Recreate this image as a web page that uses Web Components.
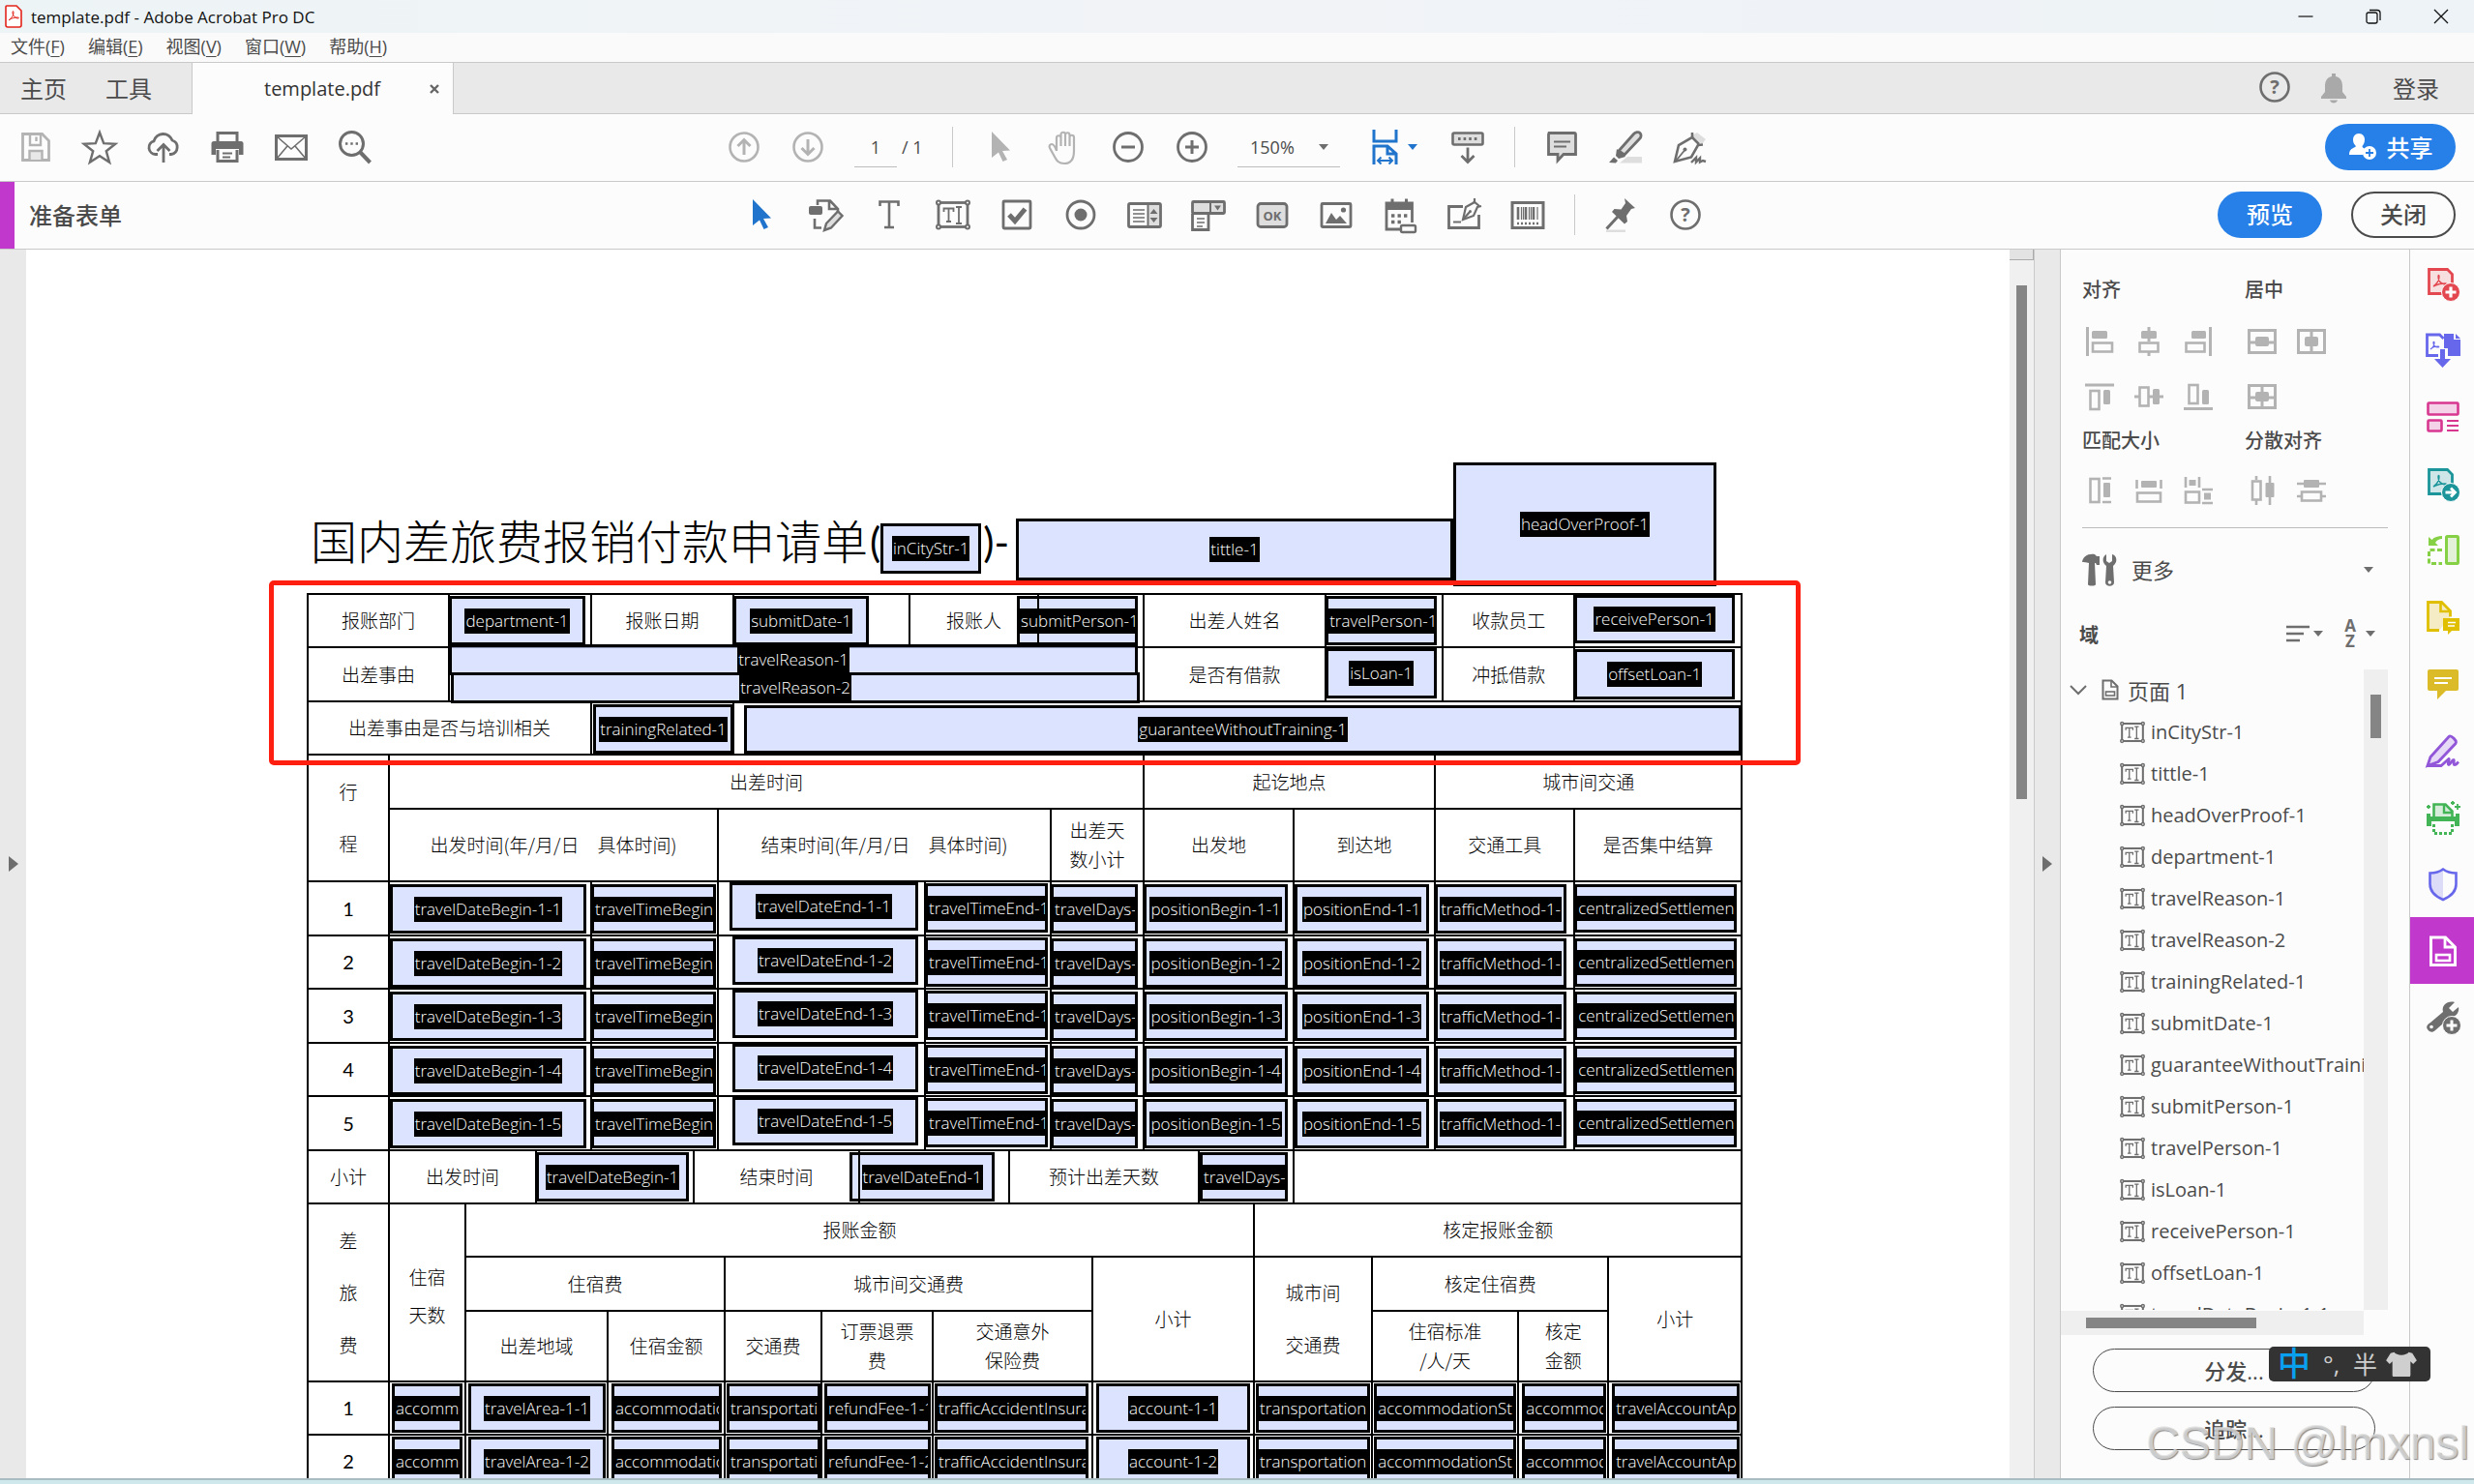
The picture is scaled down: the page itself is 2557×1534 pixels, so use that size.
<!DOCTYPE html>
<html lang="zh-CN">
<head>
<meta charset="utf-8">
<title>template.pdf - Adobe Acrobat Pro DC</title>
<style>
  html, body { margin: 0; height: 100%; }
  body {
    font-family: "Open Sans", "Noto Sans CJK SC", sans-serif;
    color: #4b4b4b;
    background: #fcfcfc;
    overflow: hidden;
    --line: #c9c9c9;
    --bar: #fcfcfc;
    --grey: #e9e9e9;
    --ink: #6e6e6e;
    --blue: #2680e8;
    --magenta: #c038cc;
  }
</style>
</head>
<body>
<acro-app></acro-app>
<script>
const RESET = `*, *::before, *::after { box-sizing: border-box; }
  button { font: inherit; color: inherit; background: none; border: 0; padding: 0; margin: 0; cursor: pointer; }`;

class Base extends HTMLElement {
  connectedCallback() {
    if (this.shadowRoot) return;
    this.attachShadow({ mode: 'open' });
    this.shadowRoot.innerHTML = `<style>${RESET}${this.css()}</style>${this.html()}`;
  }
  css() { return ''; }
  html() { return ''; }
}

/* ---------- icons ---------- */
const ICONS = {
  app: ['0 0 18 24', `<path d="M2 1h10l5 5v15a2 2 0 0 1-2 2H3a2 2 0 0 1-2-2V2a1 1 0 0 1 1-1z" fill="#fff" stroke="#e2231a" stroke-width="1.6"/><path d="M4 16c3-2 5-5 5-8 0-2-1-2-1 0 0 3 2 5 5 6 2 0 2-1 0-1-3 0-6 1-8 2-1 1-1 1-1 1z" fill="none" stroke="#e2231a"/>`],
  save: ['0 0 36 36', `<path d="M4.500 4.500h20l7 7v20h-27z" stroke-width="2.800"/><path d="M12 5v11h11V5" stroke-width="2.400"/><path d="M18.500 7.500v4.500" stroke-width="2.400"/><path d="M11.500 31V22h13v9" fill="#e8e8e8" stroke-width="2.400"/>`],
  star: ['0 0 36 36', `<path d="M18 3l4.200 11.200 12 .5-9.400 7.500 3.300 11.600L18 27.200 7.900 33.800l3.300-11.600L1.800 14.700l12-.5z" stroke-width="2.400"/>`],
  cloud: ['0 0 36 36', `<path d="M12 25.500H9.500a7 7 0 0 1-1.500-13.700A10 10 0 0 1 27 11a7.500 7.500 0 0 1-1 14.500h-2" stroke-width="2.800"/><path d="M18 34V16M11.500 22l6.500-6.500 6.500 6.500" stroke-width="2.800"/>`],
  print: ['0 0 36 36', `<path d="M8 12V3.500h20V12" stroke-width="3"/><path d="M4 12h28a2.500 2.500 0 0 1 2.500 2.500V26H30V20H6v6H1.500V14.500A2.500 2.500 0 0 1 4 12z" fill="currentColor" stroke="none"/><path d="M8 21v11.500h20V21" fill="#fcfcfc" stroke-width="3"/><path d="M13 24.500h10M13 28.500h8" stroke-width="2"/>`],
  mail: ['0 0 36 36', `<path d="M2.500 6.500h31v24h-31z" stroke-width="3"/><path d="M3 7l15 13L33 7M3 30l11-13M33 30L22 17" stroke-width="1.600"/>`],
  search: ['0 0 36 36', `<circle cx="14.500" cy="14.500" r="12" stroke-width="3"/><path d="M23 23l10.500 11" stroke-width="4"/><path d="M8 14.500h2.400M13.300 14.500h2.400M18.600 14.500H21" stroke-width="2.400"/>`],
  up: ['0 0 36 36', `<circle cx="18" cy="18" r="14.500" stroke-width="2.600"/><path d="M18 26V11M11.500 17L18 10.500l6.500 6.500" stroke-width="3"/>`],
  down: ['0 0 36 36', `<circle cx="18" cy="18" r="14.500" stroke-width="2.600"/><path d="M18 10v15M11.500 19l6.500 6.500 6.500-6.500" stroke-width="3"/>`],
  cursor: ['0 0 36 36', `<path d="M9 2l19 19.500-8 .5 5 9-4.500 2-4.500-9.500-7 5.500z" fill="currentColor" stroke="none"/>`],
  hand: ['0 0 36 36', `<path d="M10 22V8.500a2.200 2.200 0 0 1 4.500 0V17M14.500 17V5a2.200 2.200 0 0 1 4.500 0v12M19 17V5.500a2.200 2.200 0 0 1 4.500 0V17M23.500 17V8a2.200 2.200 0 0 1 4.500 0v14c0 8-3 13-10 13-6 0-8-3-10-7l-5-9c-1-2 0-4 2-4s4 4 5 7" stroke-width="2.200"/>`],
  minus: ['0 0 36 36', `<circle cx="18" cy="18" r="14.500" stroke-width="2.800"/><path d="M11 18h14" stroke-width="3"/>`],
  plus: ['0 0 36 36', `<circle cx="18" cy="18" r="14.500" stroke-width="2.800"/><path d="M11 18h14M18 11v14" stroke-width="3"/>`],
  fit: ['0 0 36 36', `<path d="M6 0v12h23V0M6 36V17h14l9 8v11M20 17v8h9" stroke-width="3"/><path d="M10 32h15M13.500 28.500L10 32l3.500 3.500M21.500 28.500L25 32l-3.500 3.500" stroke-width="2"/>`],
  keys: ['0 0 36 36', `<rect x="2.500" y="3.500" width="31" height="12" rx="1.500" fill="#dedede" stroke-width="2.600"/><path d="M8 9.500h2.600M13.600 9.500h2.600M19.200 9.500h2.600M24.800 9.500h2.600" stroke-width="3"/><path d="M18 18.500V33M11.500 27l6.500 6.500 6.500-6.500" stroke-width="2.800"/>`],
  comment: ['0 0 36 36', `<path d="M5 3.500h26a1.500 1.500 0 0 1 1.500 1.500v20.500H20L14 32v-6.500H4.500V5z" fill="#dedede" stroke-width="2.800"/><path d="M10 12.500h17M10 17.500h13" stroke-width="2"/>`],
  marker: ['0 0 36 36', `<path d="M12 34.500L20 28h15v6.500z" fill="#dedede" stroke="none"/><path d="M11 22L26.500 4.500c2-2.200 5-2.500 6.500-1s1.500 4-.5 6L17 26z" fill="#dedede" stroke-width="2.800"/><path d="M9 20l9 8-7 2-3-3z" fill="currentColor" stroke="none"/><path d="M1 34l5-5.500 4 3.500-2 2.500z" fill="currentColor" stroke="none"/>`],
  pen: ['0 0 36 36', `<path d="M21 6l10 9 4-5-9-7z" fill="#dedede" stroke="none"/><path d="M21 3v5L7 16 3 33l17-4.500L27 16l5-.5" stroke-width="2.600"/><path d="M20.500 7.500L28 15" stroke-width="2.600"/><path d="M3.500 33L13 21.500" stroke-width="1.800"/><circle cx="13.500" cy="20.500" r="2" fill="currentColor" stroke="none"/><path d="M20 34l5-5v4.500l4-4v4l3-1.500 3 1" stroke-width="2.400"/>`],
  editForm: ['0 0 36 36', `<path d="M10 8V3.500h13L31 12v4M22 4v8h8" stroke-width="2.600"/><rect x="1" y="9" width="14" height="9" rx="2" fill="currentColor" stroke="none"/><path d="M7 22v9.500h7" stroke-width="2.600"/><path d="M17 34l2-7 12-12.500 4.500 4.500L24 31.500z" fill="#dedede" stroke-width="2.400"/>`],
  text: ['0 0 36 36', `<path d="M8.500 9V4.500h19V9M18 5v25.500M13 31h10" stroke-width="2.600"/>`],
  textField: ['0 0 36 36', `<rect x="3" y="5.500" width="30" height="25" stroke-width="2.800"/><path d="M8.500 15v-3.500h10V15M13.500 12v13M11 25h5M21 10h6M21 27h6M24 10v17" stroke-width="1.800"/><g fill="#fcfcfc" stroke-width="2"><circle cx="3" cy="5.500" r="2"/><circle cx="33" cy="5.500" r="2"/><circle cx="3" cy="30.500" r="2"/><circle cx="33" cy="30.500" r="2"/></g>`],
  check: ['0 0 36 36', `<rect x="4" y="4" width="28" height="28" rx="1" stroke-width="2.800"/><path d="M10 18l6 6.500L26.500 12" stroke-width="5"/>`],
  radio: ['0 0 36 36', `<circle cx="18" cy="18" r="14" stroke-width="2.800"/><circle cx="18" cy="18" r="6.500" fill="currentColor" stroke="none"/>`],
  list: ['0 0 36 36', `<rect x="1.500" y="6.500" width="33" height="24" rx="1.500" stroke-width="2.800"/><path d="M22 8h11v21H22z" fill="#dedede" stroke="none"/><path d="M21.500 7v23" stroke-width="2"/><path d="M6 13h12M6 17h12M6 21h12M6 25h12" stroke-width="1.600"/><path d="M27.500 12l4 5h-8zM27.500 26l4-5h-8z" fill="currentColor" stroke="none"/>`],
  dropdown: ['0 0 36 36', `<rect x="1.500" y="4.500" width="33" height="12" rx="1" fill="#dedede" stroke-width="2.800"/><path d="M20 5v12" stroke-width="2"/><path d="M24 8.500h7l-3.500 5z" fill="currentColor" stroke="none"/><path d="M1.500 17v16.500H18V17" stroke-width="2.800"/><path d="M6 22h8M6 26h8M6 30h6" stroke-width="1.600"/>`],
  ok: ['0 0 36 36', `<rect x="3" y="6.500" width="30" height="24" rx="3" fill="#dedede" stroke-width="2.800"/><text x="18" y="23.500" text-anchor="middle" font-size="13" font-weight="700" font-family="Open Sans, sans-serif" fill="currentColor" stroke="none">OK</text>`],
  image: ['0 0 36 36', `<rect x="3" y="6.500" width="30" height="24" rx="1" stroke-width="2.800"/><path d="M7 27l6-11 5 7 4-4 7 8z" fill="currentColor" stroke="none"/><circle cx="25.500" cy="13" r="2.600" fill="currentColor" stroke="none"/>`],
  calendar: ['0 0 36 36', `<path d="M4 5h27v8H4z" fill="currentColor" stroke="none"/><path d="M18 33H4V6h26.500v20" stroke-width="2.800"/><path d="M10 1.500v5M24.500 1.500v5" stroke-width="3"/><path d="M9 19h3.400M15.500 19h3.400M22 19h3.400M9 25.500h3.400M15.500 25.500h3.400" stroke-width="3.600"/><rect x="19" y="29" width="15" height="7" rx="1.500" fill="#fcfcfc" stroke-width="2.400"/>`],
  sign: ['0 0 36 36', `<path d="M17 9.500H2.500v22h31V18" stroke-width="2.800"/><path d="M7 25.500h8" stroke-width="2"/><path d="M29 1v4l-9 5-3 13 11-4 4-9 4-1" fill="#fcfcfc" stroke-width="2.200"/><path d="M28 4l6 5M17.500 22.500l7-8" stroke-width="2.200"/><circle cx="24.500" cy="14.500" r="1.500" fill="currentColor" stroke="none"/>`],
  barcode: ['0 0 36 36', `<rect x="2" y="5.500" width="32" height="26" stroke-width="3"/><path d="M8 10v13M16 10v13M24 10v13" stroke-width="2.600"/><path d="M11.500 10v13M13.500 10v13M19.500 10v13M21.500 10v13M28 10v13" stroke-width="1.200"/><path d="M7 27h22" stroke-width="2.400" stroke-dasharray="2 2"/>`],
  pin: ['0 0 36 36', `<path d="M2 33.500h20v2.500H2z" fill="#dedede" stroke="none"/><path d="M21 1l11 10-4 1-5 7 1 6-3 2.500L8 15l2.500-3 7 .5L22 6z" fill="currentColor" stroke="none"/><path d="M14 20L2.500 32.500" stroke-width="3"/>`],
  help: ['0 0 36 36', `<circle cx="18" cy="18" r="14.500" stroke-width="2.600"/><text x="18" y="25" text-anchor="middle" font-size="20" font-weight="700" font-family="Open Sans, sans-serif" fill="currentColor" stroke="none">?</text>`],
  bell: ['0 0 36 36', `<path d="M16 4h4v3c5 1 7 5 7 10v6l4 5v2H5v-2l4-5v-6c0-5 2-9 7-10zM14 31.500h8c-1 4-7 4-8 0z" fill="currentColor" stroke="none"/>`],
  user: ['0 0 30 30', `<path d="M11 2c4 0 6 3 6 6.500 0 3-1.500 5.500-2.500 6.500 0 1.500 1 2 4 3.500-2 1.500-3 3.500-3 5.500H1c0-5 2-6 6-8 1-.5 1-1 .5-1.500C6 13 5 11 5 8.500 5 5 7 2 11 2z" fill="#fff" stroke="none"/><circle cx="22" cy="22" r="7" fill="#fff" stroke="none"/><path d="M22 18v8M18 22h8" stroke="#2680e8" stroke-width="1.800"/>`],
  min: ['0 0 16 16', `<path d="M0.500 8h15" stroke-width="1.200"/>`],
  restore: ['0 0 16 16', `<rect x="1" y="4" width="11" height="11" rx="2" stroke-width="1.300"/><path d="M4 1.500h8a3 3 0 0 1 3 3V12" stroke-width="1.300"/>`],
  close: ['0 0 16 16', `<path d="M1 1l14 14M15 1L1 15" stroke-width="1.300"/>`],
  x: ['0 0 12 12', `<path d="M2 2l8 8M10 2l-8 8" stroke-width="2.400"/>`],
  caret: ['0 0 10 6', `<path d="M0 0h10L5 6z" fill="currentColor" stroke="none"/>`],
  right: ['0 0 10 16', `<path d="M0 0l10 8-10 8z" fill="currentColor" stroke="none"/>`],
  chevron: ['0 0 18 12', `<path d="M1 2l8 8 8-8" stroke-width="2"/>`],
  /* alignment tools */
  alLeft: ['0 0 32 32', `<path d="M3.500 1v30" stroke-width="3"/><rect x="8" y="5" width="16" height="8" rx="1.500" fill="currentColor" stroke="none"/><rect x="9" y="17.500" width="20" height="9" stroke-width="2.600"/>`],
  alCenter: ['0 0 32 32', `<path d="M16 1v15M16 27v4" stroke-width="3"/><rect x="8" y="5" width="16" height="8" rx="1.500" fill="currentColor" stroke="none"/><rect x="6.500" y="17.500" width="19" height="9" stroke-width="2.600"/>`],
  alRight: ['0 0 32 32', `<path d="M28.500 1v30" stroke-width="3"/><rect x="9" y="5" width="15" height="8" rx="1.500" fill="currentColor" stroke="none"/><rect x="3.500" y="17.500" width="19" height="9" stroke-width="2.600"/>`],
  alTop: ['0 0 32 32', `<path d="M1 4h30" stroke-width="3"/><rect x="6.500" y="10" width="9" height="19" stroke-width="2.600"/><rect x="20" y="9" width="7" height="15" rx="1.500" fill="currentColor" stroke="none"/>`],
  alMiddle: ['0 0 32 32', `<path d="M1 16h5M15 16h16" stroke-width="3"/><rect x="6.500" y="6.500" width="9" height="19" stroke-width="2.600"/><rect x="20" y="8" width="7" height="16" rx="1.500" fill="currentColor" stroke="none"/>`],
  alBottom: ['0 0 32 32', `<path d="M1 28.500h30" stroke-width="3"/><rect x="6.500" y="4" width="9" height="19" stroke-width="2.600"/><rect x="20" y="9" width="7" height="15" rx="1.500" fill="currentColor" stroke="none"/>`],
  cH: ['0 0 32 32', `<rect x="2.500" y="4.500" width="27" height="23" stroke-width="3"/><path d="M3 17h26" stroke-width="3"/><rect x="9" y="11" width="14" height="10" rx="2" fill="currentColor" stroke="none"/>`],
  cV: ['0 0 32 32', `<rect x="2.500" y="4.500" width="27" height="23" stroke-width="3"/><path d="M16 5v22" stroke-width="3"/><rect x="9" y="11" width="14" height="10" rx="2" fill="currentColor" stroke="none"/>`],
  cB: ['0 0 32 32', `<rect x="2.500" y="4.500" width="27" height="23" stroke-width="3"/><path d="M3 17h26M16 5v22" stroke-width="3"/><rect x="9" y="11" width="14" height="10" rx="2" fill="currentColor" stroke="none"/>`],
  mH: ['0 0 32 32', `<rect x="6.500" y="4" width="9" height="24" stroke-width="2.600"/><rect x="20" y="8" width="7" height="15" rx="1" fill="currentColor" stroke="none"/><path d="M19 3.500h9M19 28h9" stroke-width="2.600"/>`],
  mW: ['0 0 32 32', `<rect x="4" y="18.500" width="24" height="9" stroke-width="2.600"/><rect x="8" y="6" width="16" height="7" rx="1" fill="currentColor" stroke="none"/><path d="M3.500 5v9M28.500 5v9" stroke-width="2.600"/>`],
  mB: ['0 0 32 32', `<path d="M3 2v11M17 2v11M20 15h11M20 29h11" stroke-width="2.600"/><rect x="6.500" y="5" width="7" height="6" fill="currentColor" stroke="none"/><rect x="3" y="17.500" width="14" height="11" stroke-width="2.600"/><rect x="22" y="18.500" width="7" height="7" fill="currentColor" stroke="none"/>`],
  dH: ['0 0 32 32', `<path d="M10 1v4M10 26v5M24 1v30" stroke-width="2.600"/><rect x="6" y="6.500" width="8.500" height="19" stroke-width="2.600"/><rect x="19.500" y="8" width="9" height="15" rx="1" fill="currentColor" stroke="none"/>`],
  dV: ['0 0 32 32', `<path d="M1 9h30M1 22h4M27 22h4" stroke-width="2.600"/><rect x="8" y="5" width="16" height="8" rx="1" fill="currentColor" stroke="none"/><rect x="6" y="17.500" width="20" height="9" stroke-width="2.600"/>`],
  tools: ['0 0 36 36', `<path d="M0 10C1 4 6 1 13 2l2 2h3v9h-3l-1-2h-1l1 22c0 2-8 2-8 0l1-22c-3-1-5-1-7-1z" fill="currentColor" stroke="none"/><path d="M25 2v7l3 2 3-2V2c4 1 5 5 4 8-1 2-2 3-3 4l1 17c0 5-9 5-9 0l1-17c-4-3-5-9 0-12z" fill="currentColor" stroke="none"/><circle cx="28.500" cy="31" r="1.800" fill="#fff" stroke="none"/>`],
  sort: ['0 0 26 20', `<path d="M1 3h24M1 10h18M1 17h14" stroke-width="2.600"/>`],
  az: ['0 0 16 30', `<text x="8" y="13" text-anchor="middle" font-size="17" font-weight="700" font-family="Open Sans, sans-serif" fill="currentColor" stroke="none">A</text><text x="8" y="29" text-anchor="middle" font-size="17" font-weight="700" font-family="Open Sans, sans-serif" fill="currentColor" stroke="none">Z</text>`],
  pageForm: ['0 0 18 22', `<path d="M1.500 1.500h9l6 6v13h-15z" stroke-width="2"/><path d="M10 2v6h6" stroke-width="1.600"/><rect x="4.500" y="13" width="9" height="4" stroke-width="1.600"/>`],
  /* tool rail */
  rCreate: ['0 0 36 36', `<path d="M3.500 3.500h19l5 5v20h-24z" fill="#f8dfdf" stroke-width="2.800"/><path d="M8 21c4-3 6-6 6-10 0-2-1-2-1 0 0 4 3 7 7 8 2 0 2-1 0-1-4 0-8 1-10 2z" stroke-width="1.400"/><circle cx="26" cy="27" r="9.500" fill="currentColor" stroke="#fcfcfc"/><path d="M20.500 27h11M26 21.500v11" stroke="#fff" stroke-width="3.200"/>`],
  rCombine: ['0 0 36 36', `<path d="M13 23.500H1.500V2h13l4 4" stroke-width="2.800"/><path d="M19 1h10v6h7v17H23v-8h-4z" fill="currentColor" stroke="none"/><path d="M31 1l5 5h-5z" fill="currentColor" stroke="none"/><path d="M5 17c3-2 4-4 4-7 0-1-1-1-1 0 0 3 2 5 5 5 1 0 1-1 0-1-3 0-6 1-8 3z" stroke-width="1.200"/><path d="M15 17h5v10h6l-8.500 9L9 27h6z" fill="currentColor" stroke="none"/>`],
  rOrganize: ['0 0 36 36', `<rect x="2.500" y="3.500" width="31" height="12" rx="1" fill="#f4d2e8" stroke-width="2.600"/><rect x="2.500" y="21.500" width="14" height="11" rx="1" fill="#f4d2e8" stroke-width="2.600"/><path d="M22 22h12M22 27h12M22 32h12" stroke-width="1.800"/>`],
  rExport: ['0 0 36 36', `<path d="M3.500 3.500h19l5 5v20h-24z" fill="#cfe6e8" stroke-width="2.800"/><path d="M8 21c4-3 6-6 6-10 0-2-1-2-1 0 0 4 3 7 7 8 2 0 2-1 0-1-4 0-8 1-10 2z" stroke-width="1.400"/><circle cx="26" cy="27" r="9.500" fill="currentColor" stroke="#fcfcfc"/><path d="M20.500 27h9M26 22.500l4.500 4.500-4.500 4.500" stroke="#fff" stroke-width="2.800"/>`],
  rCompress: ['0 0 36 36', `<rect x="21.500" y="3.500" width="12" height="28" rx="1" fill="#e3f1d8" stroke-width="3"/><path d="M17 17.500H3.500v14H17" stroke-width="3" stroke-dasharray="5 2.500"/><path d="M3 4l3.500 3C9 4 13 3 17 3v3c-3 0-5 1-7 4l3 3H3z" fill="currentColor" stroke="none"/>`],
  rPageNote: ['0 0 36 36', `<path d="M14 31.500H2.500v-29h14l9 9v6" fill="#f5ecc6" stroke-width="2.800"/><path d="M15.500 3v9h9" stroke-width="2.600"/><path d="M18 19h17v13h-8l-4 4v-4h-5z" fill="currentColor" stroke="none"/><path d="M23 23.500h8M23 27h7" stroke="#fff" stroke-width="1.400"/>`],
  rComment: ['0 0 36 36', `<path d="M4 3h28a2 2 0 0 1 2 2v18a2 2 0 0 1-2 2H21l-9 9v-9H4a2 2 0 0 1-2-2V5a2 2 0 0 1 2-2z" fill="currentColor" stroke="none"/><path d="M9 12h18M9 17h14" stroke="#fff" stroke-width="2"/>`],
  rSign: ['0 0 36 36', `<path d="M2 33.500l3-9L24 3.500c2-2 9 4 7 7L13 29.500z" fill="#e6daf6" stroke-width="2.800"/><path d="M2 33.500h14l8-7c1 0-2 6 0 6 1.500 0 3-5 5-5 1 0-1 5 1 5s2-1 4-3" stroke-width="2.800"/>`],
  rScan: ['0 0 36 36', `<path d="M8.500 17V4.500h12l7 7V17" fill="#d8ecdc" stroke-width="2.600"/><path d="M19 5v8h8" stroke-width="2.400"/><path d="M1 14h4v3h26v-3h4v13h-5v-5H6v5H1z" fill="currentColor" stroke="none"/><path d="M8.500 25v9.500h19V25" stroke-width="3" stroke-dasharray="3 2"/><path d="M3 5v4M1 7h4M28 1v4M26 3h4M33 4v6M30 7h6" stroke-width="1.800"/>`],
  rShield: ['0 0 36 36', `<path d="M18 3v30C9 29 5 24 5 18V7c5 0 9-1 13-4z" fill="#dcdcf9" stroke="none"/><path d="M18 2.500c4 3 8 4 13.500 4V18c0 7-4 12-13.500 16C8.500 30 4.500 25 4.500 18V6.500c5.500 0 9.500-1 13.500-4z" stroke-width="2.600"/>`],
  rForm: ['0 0 36 36', `<path d="M5.500 4h15l10 10v18.500h-25z" stroke-width="3"/><path d="M20 4.500V14h10" stroke-width="2.800"/><rect x="11" y="22" width="14" height="6" stroke-width="2.600"/>`],
  rTools: ['0 0 36 36', `<path d="M30 2l-6 6 4 4 6-5c1 5-2 10-8 10L10 31c-3 3-6 2-8-1s0-5 3-7L18 12c-2-7 5-12 12-10z" fill="currentColor" stroke="none"/><circle cx="6" cy="27.500" r="1.800" fill="#fff" stroke="none"/><circle cx="27" cy="26" r="9.500" fill="currentColor" stroke="#fcfcfc"/><path d="M21.500 26h11M27 20.500v11" stroke="#fff" stroke-width="3"/>`],
  shirt: ['0 0 34 30', `<path d="M9 2c2 4 14 4 16 0l4 1 5 8-4 4-3-3v15c0 2-1 2-2 2H9c-2 0-2-1-2-2V12l-3 3-4-4 5-8z" fill="#cfcfcf" stroke="none"/>`]
};
class PdfIcon extends Base {
  css() { return `:host { display: block; flex: none; width: 36px; height: 36px; }
    svg { display: block; width: 100%; height: 100%; overflow: visible; fill: none; stroke: currentColor; }`; }
  html() {
    const [box, body] = ICONS[this.getAttribute('name')];
    return `<svg viewBox="${box}" aria-hidden="true">${body}</svg>`;
  }
}
customElements.define('pdf-icon', PdfIcon);

/* ---------- window chrome ---------- */
customElements.define('title-bar', class extends Base {
  css() { return `:host { display: flex; align-items: center; height: 34px; padding: 0 26px 0 5px; gap: 9px; color: #111;
      font-size: 17px; background: linear-gradient(90deg, #edf4f6, #f1f3f7 50%, #edf3f6); }
    .app { width: 18px; height: 24px; }
    .grow { flex: 1; }
    .ctl { display: flex; gap: 54px; }
    .ctl pdf-icon { width: 16px; height: 16px; }`; }
  html() { return `<pdf-icon class="app" name="app"></pdf-icon><span>template.pdf - Adobe Acrobat Pro DC</span><span class="grow"></span>
    <div class="ctl"><button aria-label="最小化"><pdf-icon name="min"></pdf-icon></button><button aria-label="还原"><pdf-icon name="restore"></pdf-icon></button><button aria-label="关闭窗口"><pdf-icon name="close"></pdf-icon></button></div>`; }
});
customElements.define('menu-bar', class extends Base {
  css() { return `:host { display: flex; align-items: center; box-sizing: border-box; height: 31px; padding: 0 11px 3px; gap: 24px; font-size: 18px; background: #fafafa; border-bottom: 1px solid var(--line); }
    button { font-size: 18px; line-height: 26px; white-space: nowrap; } u { text-underline-offset: 3px; text-decoration-thickness: 1px; }`; }
  html() { return [['文件','F'],['编辑','E'],['视图','V'],['窗口','W'],['帮助','H']].map(([a,b]) => `<button>${a}(<u>${b}</u>)</button>`).join(''); }
});
customElements.define('tab-strip', class extends Base {
  css() { return `:host { display: flex; height: 53px; background: var(--grey); font-size: 24px; }
    .side { display: flex; align-items: center; padding-bottom: 2px; border-bottom: 1px solid var(--line); }
    .home { gap: 40px; width: 199px; padding-left: 21px; border-right: 1px solid var(--line); }
    .tab { display: flex; align-items: center; width: 270px; padding: 0 13px 0 74px; background: var(--bar); font-size: 20px; color: #333; border-right: 1px solid var(--line); }
    .tab span { flex: 1; }
    .tab pdf-icon { width: 12px; height: 12px; color: #666; }
    .end { flex: 1; justify-content: flex-end; padding-right: 36px; color: #6e6e6e; }
    .end button:nth-child(2) { margin: 0 43px 0 25px; color: #a9a9a9; }
    .end button:last-child { color: #4b4b4b; }`; }
  html() { return `<div class="side home"><button>主页</button><button>工具</button></div>
    <div class="tab"><span>template.pdf</span><button aria-label="关闭标签"><pdf-icon name="x"></pdf-icon></button></div>
    <div class="side end"><button aria-label="帮助"><pdf-icon name="help"></pdf-icon></button><button aria-label="通知"><pdf-icon name="bell"></pdf-icon></button><button>登录</button></div>`; }
});

const BAR = `:host { display: grid; align-items: center; box-sizing: border-box; height: 70px; padding-bottom: 1px; background: var(--bar); border-bottom: 1px solid var(--line); color: var(--ink); }
  .g { display: flex; align-items: center; }
  .i { display: flex; justify-content: center; width: 66px; }
  .dim { color: #b3b3b3; } .blue { color: #2174cc; }
  .rule { width: 1px; height: 42px; background: var(--line); }
  .end { justify-content: flex-end; padding-right: 19px; gap: 30px; }
  .pill { display: flex; align-items: center; justify-content: center; height: 48px; padding-bottom: 2px; border-radius: 24px; font-size: 24px; font-weight: 500; }
  .fill { background: var(--blue); color: #fff; }
  .out { border: 2px solid #4b4b4b; color: #4b4b4b; }`;
const btn = (n, label, cls = '') => `<button class="i ${cls}" aria-label="${label}"><pdf-icon name="${n}"></pdf-icon></button>`;

customElements.define('main-toolbar', class extends Base {
  css() { return BAR + `:host { grid-template-columns: minmax(auto, 736fr) auto minmax(auto, 778fr); }
    .start { padding-left: 4px; }
    input, select { font: 18px "Open Sans", sans-serif; color: #4b4b4b; background: none; border: 0; border-bottom: 1px solid #bdbdbd; border-radius: 0; height: 42px; outline: 0; appearance: none; }
    input { width: 44px; margin-left: 15px; padding: 0; text-align: center; }
    .of { width: 26px; margin: 0 26px 0 5px; font-size: 18px; color: #4b4b4b; white-space: nowrap; }
    .r1 { margin-right: 16px; }
    .zoom { display: grid; align-items: center; width: 106px; margin: 0 29px 0 14px; }
    .zoom > * { grid-area: 1 / 1; }
    .zoom select { width: 100%; padding: 0 0 0 13px; }
    .zoom pdf-icon { justify-self: end; margin-right: 12px; }
    .small { width: 10px; height: 6px; }
    .fit { display: flex; align-items: center; gap: 5px; margin-right: 19px; }
    .r2 { margin: 0 15px; }
    .share { width: 135px; gap: 10px; }
    .share pdf-icon { width: 30px; height: 30px; }`; }
  html() { return `<div class="g start">${btn('save','保存','dim')}${btn('star','收藏')}${btn('cloud','上传')}${btn('print','打印')}${btn('mail','邮件')}${btn('search','查找')}</div>
    <div class="g">${btn('up','上一页','dim')}${btn('down','下一页','dim')}<input value="1" aria-label="页码"><span class="of">/ 1</span><span class="rule r1"></span>
    ${btn('cursor','选择','dim')}${btn('hand','手形','dim')}${btn('minus','缩小')}${btn('plus','放大')}
    <label class="zoom"><select aria-label="缩放"><option>150%</option></select><pdf-icon class="small" name="caret"></pdf-icon></label>
    <button class="fit blue" aria-label="适合宽度"><pdf-icon name="fit"></pdf-icon><pdf-icon class="small" name="caret"></pdf-icon></button>
    ${btn('keys','页面显示')}<span class="rule r2"></span>${btn('comment','附注')}${btn('marker','高亮')}${btn('pen','签名')}</div>
    <div class="g end"><button class="pill fill share"><pdf-icon name="user"></pdf-icon>共享</button></div>`; }
});
customElements.define('prepare-toolbar', class extends Base {
  css() { return BAR + `:host { grid-template-columns: minmax(auto, 755fr) auto minmax(auto, 783fr); padding-bottom: 0; }
    .g { padding-bottom: 2px; }
    .start { align-self: stretch; border-left: 15px solid var(--magenta); padding-left: 15px; font-size: 24px; color: #4b4b4b; font-weight: 500; }
    .rule { margin: 0 15px; }
    .end .pill { width: 108px; }`; }
  html() { return `<div class="g start">准备表单</div>
    <div class="g">${btn('cursor','选择对象','blue')}${btn('editForm','编辑')}${btn('text','添加文本')}${btn('textField','文本域')}${btn('check','复选框')}${btn('radio','单选按钮')}${btn('list','列表框')}${btn('dropdown','下拉列表')}${btn('ok','按钮')}${btn('image','图像域')}${btn('calendar','日期域')}${btn('sign','签名域')}${btn('barcode','条形码')}<span class="rule"></span>${btn('pin','固定')}${btn('help','帮助')}</div>
    <div class="g end"><button class="pill fill">预览</button><button class="pill out">关闭</button></div>`; }
});

/* ---------- document ---------- */
customElements.define('form-field', class extends Base {
  css() { return `:host { display: flex; align-items: center; justify-content: center; box-sizing: border-box; border: 3px solid #000; background: rgba(205, 215, 255, .7); min-width: 0; }
    span { max-width: 100%; overflow: hidden; white-space: nowrap; background: #000; color: #fff; font: 300 17px/26px "Open Sans", sans-serif; padding: 0 1px; }`; }
  html() { return `<span><slot></slot></span>`; }
});

/* cell: [start, end, content, options]; a field is {f: name, l, r, t, h} with its margins inside the ruled cell */
const F = (f, l, r, t = 2, h = 51) => ({ f, l, r, t, h });
const fieldTag = o => `<form-field style="margin:${o.t}px ${o.r}px 0 ${o.l}px;height:${o.h}px">${o.f}</form-field>`;
const trip = (n, h) => [h, [
  [0, 84, n, { c: 'n' }],
  [84, 293, F(`travelDateBegin-1-${n}`, 0, 4)], [293, 424, F('travelTimeBegin-', -1, 1)],
  [424, 638, F(`travelDateEnd-1-${n}`, n === 1 ? 11 : 14, 6, 0, 50)], [638, 768, F('travelTimeEnd-1', -1, 2, 1)],
  [768, 864, F('travelDays-1', -1, 5)], [864, 1019, F(`positionBegin-1-${n}`, -1, 5)],
  [1019, 1165, F(`positionEnd-1-${n}`, 0, 5)], [1165, 1309, F('trafficMethod-1-', -1, 7)],
  [1309, 1482, F('centralizedSettlement', -1, 4, 2, 50)]]];
const cost = n => [55, [
  [0, 84, n, { c: 'n' }],
  [84, 163, F('accommo', 2, 2, 1)], [163, 310, F(`travelArea-1-${n}`, 2, 1, 1)],
  [310, 431, F('accommodatio', 3, 2, 1)], [431, 531, F('transportati', 1, 0, 1)],
  [531, 646, F(`refundFee-1-${n}`, 2, 1, 1)], [646, 811, F('trafficAccidentInsura', 1, 3, 1)],
  [811, 978, F(`account-1-${n}`, 3, 3, 1)], [978, 1100, F('transportationF', 1, 1, 1)],
  [1100, 1251, F('accommodationSt', 1, 1, 1)], [1251, 1344, F('accommod', 3, 1, 1)],
  [1344, 1482, F('travelAccountApp', 3, 1, 1)]]];
const ROWS = [
  [55, [[0,146,'报账部门'],[146,293,F('department-1',-1,5,1)],[293,440,'报账日期'],[440,622,F('submitDate-1',-1,41,1)],[622,755,'报账人'],[755,864,F('submitPerson-1',-23,5,1)],[864,1052,'出差人姓名'],[1052,1173,F('travelPerson-1',-1,5,1)],[1173,1309,'收款员工'],[1309,1482,F('receivePerson-1',-1,6,0,50)]]],
  [56, [[0,146,'出差事由'],[146,864,'stack'],[864,1052,'是否有借款'],[1052,1173,F('isLoan-1',-1,5,0,52)],[1173,1309,'冲抵借款'],[1309,1482,F('offsetLoan-1',-1,6,1,52)]]],
  [55, [[0,293,'出差事由是否与培训相关'],[293,440,F('trainingRelated-1',1,-1,2,51)],[440,1482,F('guaranteeWithoutTraining-1',10,-1,3,50)]]],
  [56, [[0,84,'行<br>程',{rs:2,c:'tall'}],[84,864,'出差时间'],[864,1165,'起讫地点'],[1165,1482,'城市间交通']]],
  [75, [[84,424,'出发时间(年/月/日　具体时间)'],[424,768,'结束时间(年/月/日　具体时间)'],[768,864,'出差天<br>数小计'],[864,1019,'出发地'],[1019,1165,'到达地'],[1165,1309,'交通工具'],[1309,1482,'是否集中结算']]],
  trip(1, 56), trip(2, 55), trip(3, 56), trip(4, 55), trip(5, 56),
  [55, [[0,84,'小计'],[84,236,'出发时间'],[236,399,F('travelDateBegin-1',-1,4,1)],[399,570,'结束时间'],[570,725,F('travelDateEnd-1',-11,14,1)],[725,921,'预计出差天数'],[921,1019,F('travelDays-1',0,5,1)],[1019,1482,'']]],
  [55, [[0,84,'差<br>旅<br>费',{rs:3,c:'tall'}],[84,163,'住宿<br>天数',{rs:3,c:'mid'}],[163,978,'报账金额'],[978,1482,'核定报账金额']]],
  [56, [[163,431,'住宿费'],[431,811,'城市间交通费'],[811,978,'小计',{rs:2}],[978,1100,'城市间<br>交通费',{rs:2,c:'tall'}],[1100,1344,'核定住宿费'],[1344,1482,'小计',{rs:2}]]],
  [73, [[163,310,'出差地域'],[310,431,'住宿金额'],[431,531,'交通费'],[531,646,'订票退票<br>费'],[646,811,'交通意外<br>保险费'],[1100,1251,'住宿标准<br>/人/天'],[1251,1344,'核定<br>金额']]],
  cost(1), cost(2)
];

customElements.define('form-sheet', class extends Base {
  css() { return `:host { display: block; width: 1498px; margin: 0 auto; padding: 220px 0 0 14px; color: #000; }
    header { display: flex; align-items: flex-end; margin-bottom: 7px; padding-right: 27px; }
    h1 { display: flex; align-items: flex-end; margin: 0 0 0 4px; font: 300 48px/56px "Noto Sans CJK SC", sans-serif; white-space: nowrap; }
    h1 span { margin-bottom: 21px; }
    h1 .p { margin: 0 0 18px 2px; font: 400 42px/56px Lato, sans-serif; }
    .city { width: 104px; height: 52px; margin-bottom: 13px; }
    .tittle { width: 452px; height: 64px; margin: 0 0 6px auto; }
    .head { width: 272px; height: 128px; }
    .wrap { position: relative; }
    table { width: 1484px; border-collapse: collapse; table-layout: fixed; font: 300 19px/30px "Noto Sans CJK SC", sans-serif; }
    td { border: 2px solid #000; padding: 0 0 1px; text-align: center; vertical-align: middle; overflow: visible; white-space: nowrap; }
    td.f { vertical-align: top; padding: 0; }
    td.n { font-family: Lato, sans-serif; font-size: 20px; font-weight: 400; }
    .tall { line-height: 54px; }
    td.mid { line-height: 39px; padding: 6px 0 0; }
    .stack { display: flex; flex-direction: column; margin: -4px 5px -4px -1px; }
    .stack form-field { height: 32px; }
    .stack form-field + form-field { margin: -3px -2px 0 2px; }
    mark { position: absolute; inset: -13px -60px auto -39px; height: 191px; border: 5px solid #ff1f10; border-radius: 5px; background: none; pointer-events: none; }`; }
  html() {
    const stops = [...new Set(ROWS.flatMap(r => r[1].flatMap(c => [c[0], c[1]])))].sort((a, b) => a - b);
    const cols = stops.slice(1).map((s, i) => `<col style="width:${s - stops[i]}px">`).join('');
    const cell = ([a, b, body, o = {}]) => {
      const field = typeof body === 'object' || body === 'stack';
      const inner = body === 'stack'
        ? '<div class="stack"><form-field>travelReason-1</form-field><form-field>travelReason-2</form-field></div>'
        : field ? fieldTag(body) : body;
      return `<td class="${field ? 'f' : o.c || ''}" colspan="${stops.indexOf(b) - stops.indexOf(a)}" rowspan="${o.rs || 1}">${inner}</td>`;
    };
    return `<header><h1><span>国内差旅费报销付款申请单</span><span class="p">(</span><form-field class="city">inCityStr-1</form-field><span class="p">)-</span></h1>
      <form-field class="tittle">tittle-1</form-field><form-field class="head">headOverProof-1</form-field></header>
      <div class="wrap"><table><colgroup>${cols}</colgroup><tbody>${ROWS.map(([h, cs]) => `<tr style="height:${h}px">${cs.map(cell).join('')}</tr>`).join('')}</tbody></table><mark></mark></div>`;
  }
});

customElements.define('doc-view', class extends Base {
  css() { return `:host { flex: 1; display: flex; min-width: 0; min-height: 0; }
    .edge { display: flex; align-items: center; justify-content: center; width: 27px; background: var(--grey); color: var(--ink); flex: none; }
    .edge pdf-icon { width: 10px; height: 16px; }
    .page { flex: 1; min-width: 0; overflow: hidden; background: #fff; }
    .scroll { width: 25px; flex: none; background: #f0f0f0; }
    .split { height: 11px; background: #e3e3e3; border: solid #aaa; border-width: 0 1px 1px 0; }
    .thumb { width: 11px; height: 531px; margin: 26px 0 0 7px; background: #858585; }
    .r { border: solid var(--line); border-width: 0 1px; width: 28px; }`; }
  html() { return `<button class="edge" aria-label="展开导览窗格"><pdf-icon name="right"></pdf-icon></button>
    <div class="page"><form-sheet></form-sheet></div>
    <div class="scroll"><div class="split"></div><div class="thumb"></div></div>
    <button class="edge r" aria-label="收起工具窗格"><pdf-icon name="right"></pdf-icon></button>`; }
});

/* ---------- side panel ---------- */
customElements.define('align-tools', class extends Base {
  css() { return `:host { display: grid; grid-template-columns: 168px 1fr; margin: 0 22px; padding: 27px 0 22px; border-bottom: 1px solid #bdbdbd; color: #b3b3b3; }
    h3 { margin: 0; font-size: 20px; line-height: 30px; font-weight: 500; color: #4b4b4b; }
    .row { display: flex; gap: 19px; padding-left: 2px; height: 32px; }
    .a { margin-top: 22px; } .b { margin: 25px 0 15px; } .c { margin-top: 20px; }
    pdf-icon { width: 32px; height: 32px; }`; }
  html() {
    const row = (c, list) => `<div class="row ${c}">${list.map(n => `<button aria-label="${n}"><pdf-icon name="${n}"></pdf-icon></button>`).join('')}</div>`;
    return `<h3>对齐</h3><h3>居中</h3>${row('a',['alLeft','alCenter','alRight'])}${row('a',['cH','cV'])}${row('b',['alTop','alMiddle','alBottom'])}${row('b',['cB'])}
      <h3>匹配大小</h3><h3>分散对齐</h3>${row('c',['mH','mW','mB'])}${row('c',['dH','dV'])}`; }
});
customElements.define('field-tree', class extends Base {
  css() { return `:host { flex: 1; min-height: 0; display: grid; grid-template: minmax(0, 1fr) 26px / minmax(0, 1fr) 25px; margin-right: 22px; font-size: 20px; color: #4b4b4b; }
    .list { overflow: hidden; }
    .page, .item { display: flex; align-items: center; height: 43px; white-space: nowrap; }
    .page { padding: 0 0 2px 9px; font-size: 22px; }
    .page .v { width: 18px; height: 12px; color: var(--ink); }
    .page .d { width: 18px; height: 22px; margin: 0 9px 0 15px; color: var(--ink); }
    .item { padding-left: 61px; gap: 6px; }
    .item pdf-icon { width: 26px; height: 26px; color: var(--ink); }
    ul { margin: 0; padding: 0; list-style: none; }
    .v-bar { background: #efefef; padding: 26px 7px 0; }
    .v-bar i { display: block; width: 11px; height: 45px; background: #858585; }
    .h-bar { background: #efefef; margin-top: 1px; padding: 7px 0 0 26px; }
    .h-bar i { display: block; width: 176px; height: 11px; background: #858585; }`; }
  html() {
    const names = ['inCityStr-1','tittle-1','headOverProof-1','department-1','travelReason-1','travelReason-2','trainingRelated-1','submitDate-1','guaranteeWithoutTraining-1','submitPerson-1','travelPerson-1','isLoan-1','receivePerson-1','offsetLoan-1','travelDateBegin-1-1'];
    return `<div class="list"><div class="page"><pdf-icon class="v" name="chevron"></pdf-icon><pdf-icon class="d" name="pageForm"></pdf-icon>页面 1</div>
      <ul>${names.map(n => `<li class="item"><pdf-icon name="textField"></pdf-icon>${n}</li>`).join('')}</ul></div>
      <div class="v-bar"><i></i></div><div class="h-bar"><i></i></div>`; }
});
customElements.define('side-panel', class extends Base {
  css() { return `:host { display: flex; flex-direction: column; width: 360px; flex: none; background: var(--bar); color: var(--ink); }
    .more { display: flex; align-items: center; height: 86px; padding: 0 37px 0 22px; font-size: 22px; color: #4b4b4b; }
    .more pdf-icon { color: var(--ink); }
    .more span { flex: 1; text-align: left; padding: 0 0 2px 15px; }
    .head { display: flex; align-items: center; height: 46px; padding: 0 35px 0 19px; }
    h2 { flex: 1; margin: 0; font-size: 20px; font-weight: 700; color: #4b4b4b; }
    .c { width: 10px; height: 6px; }
    .head button { display: flex; align-items: center; gap: 3px; }
    .head button + button { margin-left: 20px; gap: 8px; }
    .s { width: 26px; height: 20px; } .z { width: 16px; height: 30px; }
    field-tree { margin-top: 14px; }
    .acts { display: grid; gap: 15px; padding: 14px 35px 29px 33px; }
    .acts button { height: 45px; padding-bottom: 2px; border: 1px solid #4b4b4b; border-radius: 23px; font-size: 22px; font-weight: 500; color: #4b4b4b; }`; }
  html() { return `<align-tools></align-tools>
    <button class="more"><pdf-icon name="tools"></pdf-icon><span>更多</span><pdf-icon class="c" name="caret"></pdf-icon></button>
    <div class="head"><h2>域</h2><button aria-label="排序方式"><pdf-icon class="s" name="sort"></pdf-icon><pdf-icon class="c" name="caret"></pdf-icon></button><button aria-label="字母顺序"><pdf-icon class="z" name="az"></pdf-icon><pdf-icon class="c" name="caret"></pdf-icon></button></div>
    <field-tree></field-tree>
    <div class="acts"><button>分发...</button><button>追踪...</button></div>`; }
});
customElements.define('tool-rail', class extends Base {
  css() { return `:host { display: flex; flex-direction: column; width: 67px; flex: none; border-left: 1px solid var(--line); background: var(--bar); }
    button { display: flex; align-items: center; justify-content: center; height: 69px; padding-left: 2px; }
    .on { background: var(--magenta); }`; }
  html() {
    return [['rCreate','#e34850','创建'],['rCombine','#6767ec','合并'],['rOrganize','#d83790','组织'],['rExport','#1b959a','导出'],['rCompress','#85d044','优化'],['rPageNote','#dfbf00','注释'],['rComment','#dcbb29','评论'],['rSign','#9256d9','填写和签名'],['rScan','#44b556','扫描'],['rShield','#6767ec','保护'],['rForm','#fff','准备表单'],['rTools','#6e6e6e','更多工具']]
      .map(([n, c, l]) => `<button class="${n === 'rForm' ? 'on' : ''}" style="color:${c}" aria-label="${l}"><pdf-icon name="${n}"></pdf-icon></button>`).join(''); }
});

/* ---------- floating pieces ---------- */
customElements.define('ime-bar', class extends Base {
  css() { return `:host { position: absolute; right: 45px; bottom: 106px; display: flex; align-items: center; gap: 9px; box-sizing: border-box; width: 167px; height: 36px; padding: 0 9px; border-radius: 5px; background: #333; color: #cfcfcf; font-size: 25px; line-height: 36px; }
    .zh { color: #0aa0f0; font-size: 34px; padding-bottom: 2px; font-weight: 500; }
    .p { width: 26px; padding-left: 4px; white-space: nowrap; }
    pdf-icon { width: 32px; height: 28px; }`; }
  html() { return `<span class="zh">中</span><span class="p">°,</span><span>半</span><pdf-icon name="shirt"></pdf-icon>`; }
});
customElements.define('water-mark', class extends Base {
  css() { return `:host { position: absolute; right: 5px; bottom: 14px; font: 48px/56px "Liberation Sans", sans-serif; color: rgba(225, 225, 225, .75); text-shadow: 1px 1px 1px rgba(90, 90, 90, .7); white-space: nowrap; pointer-events: none; }`; }
  html() { return `<slot></slot>`; }
});

customElements.define('acro-app', class extends Base {
  css() { return `:host { display: flex; flex-direction: column; height: 100vh; position: relative; overflow: hidden; }
    main { flex: 1; min-height: 0; display: flex; }
    footer { height: 6px; flex: none; background: #cfe8ec; border-top: 2px solid #a9bcc2; }`; }
  html() { return `<title-bar></title-bar><menu-bar></menu-bar><tab-strip></tab-strip><main-toolbar></main-toolbar><prepare-toolbar></prepare-toolbar>
    <main><doc-view></doc-view><side-panel></side-panel><tool-rail></tool-rail></main><footer></footer>
    <ime-bar></ime-bar><water-mark>CSDN @lmxnsl</water-mark>`; }
});
</script>
</body>
</html>
